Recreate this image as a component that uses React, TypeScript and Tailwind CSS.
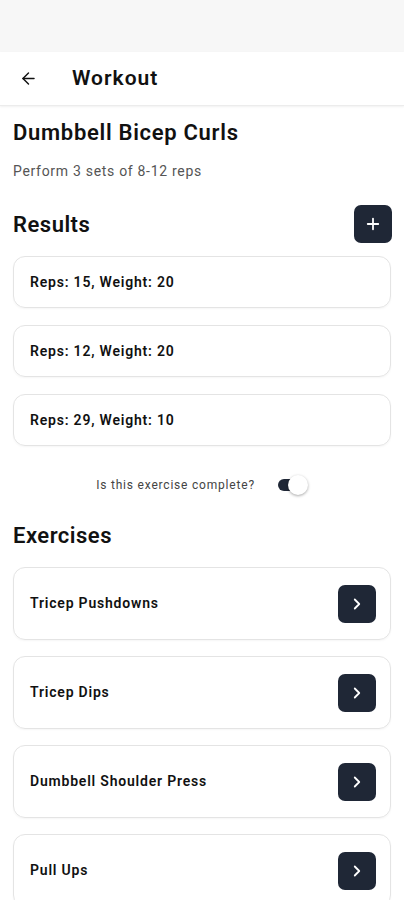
import { ArrowLeft, ChevronRight, Plus } from "lucide-react";

const results = [
    { id: 1, reps: 15, weight: 20 },
    { id: 2, reps: 12, weight: 20 },
    { id: 3, reps: 29, weight: 10 },
];

const exercises = [
    { id: 1, name: "Tricep Pushdowns" },
    { id: 2, name: "Tricep Dips" },
    { id: 3, name: "Dumbbell Shoulder Press" },
    { id: 4, name: "Pull Ups" },
];

const App = () => {
    return (
        <div className="w-[404px] h-[900px] overflow-hidden bg-white text-[#111] font-['Roboto',sans-serif]">
            <div className="h-[52px] bg-[#f7f7f7]"></div>
            <div className="h-[54px] flex items-center border-b border-[#ececec] shadow-[0_1px_2px_rgba(0,0,0,0.06)]">
                <div className="w-[72px] pl-[19px] flex items-center">
                    <ArrowLeft size={19} strokeWidth={1.8} />
                </div>
                <p className="text-[21px] font-semibold tracking-[1px]">Workout</p>
            </div>
            <div className="px-[13px]">
                <p className="text-[22px] font-semibold mt-[14px] leading-[26px] tracking-[0.7px]">Dumbbell Bicep Curls</p>
                <p className="text-[14px] text-[#555] mt-[16px] leading-[18px] tracking-[0.7px]">Perform 3 sets of 8-12 reps</p>
                <div className="flex items-center justify-between mt-[25px] -mr-[1px]">
                    <p className="text-[22px] font-semibold tracking-[0.5px]">Results</p>
                    <button className="w-[38px] h-[38px] rounded-[7px] bg-[#1f2736] text-white flex items-center justify-center">
                        <Plus size={18} strokeWidth={2.4} />
                    </button>
                </div>
                <div className="flex flex-col gap-[17px] mt-[13px]">
                    {results.map(r => (
                        <div key={r.id} className="h-[52px] border border-[#e4e4e4] rounded-[12px] flex items-center px-[16px] shadow-[0_1px_2px_rgba(0,0,0,0.04)]">
                            <p className="text-[14px] font-semibold tracking-[0.8px]">Reps: {r.reps}, Weight: {r.weight}</p>
                        </div>
                    ))}
                </div>
                <div className="flex items-center justify-center mt-[28px] h-[22px]">
                    <p className="text-[12px] text-[#444] tracking-[0.8px]">Is this exercise complete?</p>
                    <div className="relative w-[31px] h-[22px] ml-[22px]">
                        <div className="absolute left-[1px] top-[5px] w-[22px] h-[12px] rounded-full bg-[#1f2736]"></div>
                        <div className="absolute left-[11px] top-[1px] w-[20px] h-[20px] rounded-full bg-white shadow-[0_1px_3px_rgba(0,0,0,0.35)]"></div>
                    </div>
                </div>
                <p className="text-[22px] font-semibold mt-[23px] tracking-[0.5px]">Exercises</p>
                <div className="flex flex-col gap-[16px] mt-[15px]">
                    {exercises.map(e => (
                        <div key={e.id} className="h-[73px] border border-[#e4e4e4] rounded-[12px] flex items-center justify-between pl-[16px] pr-[14px] shadow-[0_1px_2px_rgba(0,0,0,0.04)]">
                            <p className="text-[14px] font-semibold tracking-[0.8px]">{e.name}</p>
                            <button className="w-[38px] h-[38px] rounded-[7px] bg-[#1f2736] text-white flex items-center justify-center">
                                <ChevronRight size={18} strokeWidth={2.4} />
                            </button>
                        </div>
                    ))}
                </div>
            </div>
        </div>
    );
}

export default App;
